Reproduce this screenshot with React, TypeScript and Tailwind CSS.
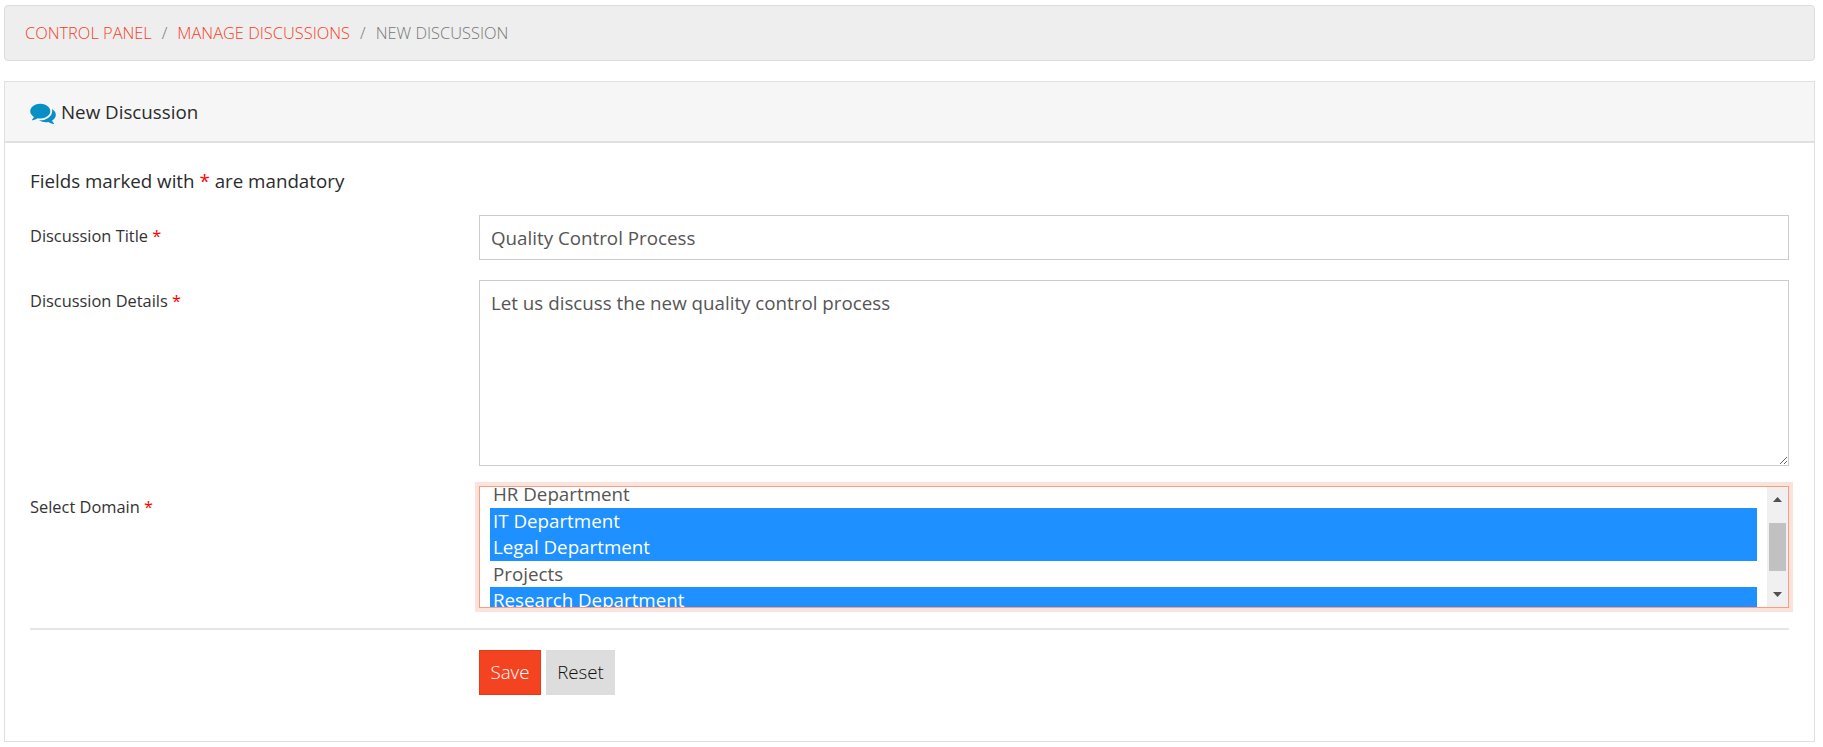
import { useLayoutEffect, useRef } from 'react';

const departments = [
    { name: 'Finance Department', selected: false },
    { name: 'HR Department', selected: false },
    { name: 'IT Department', selected: true },
    { name: 'Legal Department', selected: true },
    { name: 'Projects', selected: false },
    { name: 'Research Department', selected: true },
    { name: 'Sales Department', selected: false },
];

function Req() {
    return <span className="text-[#f00]">*</span>;
}

function FormRow({ label, children, className }: { label: string; children: React.ReactNode; className: string }) {
    return (
        <div className={`flex ${className}`}>
            <label className="w-[449px] shrink-0 pt-[11px] text-[16.4px] leading-[20px] text-[#333]">
                {label} <Req />
            </label>
            <div className="flex-1">{children}</div>
        </div>
    );
}

function DomainSelect() {
    const listRef = useRef<HTMLDivElement>(null);
    useLayoutEffect(() => {
        if (listRef.current) listRef.current.scrollTop = 32;
    }, []);
    return (
        <div className="flex h-[122px] border border-[#ff9a85] ring-4 ring-[#fae3da] bg-white overflow-hidden">
            <div ref={listRef} className="flex-1 overflow-hidden px-[10px]">
                {departments.map((d) => (
                    <div
                        key={d.name}
                        className={`h-[26.4px] px-[3px] text-[18.75px] leading-[26.4px] ${d.selected ? 'bg-[#1e90ff] text-white' : 'text-[#555]'}`}
                    >
                        {d.name}
                    </div>
                ))}
            </div>
            <div className="w-[21px] shrink-0 bg-[#f0f0f0] flex flex-col items-center justify-between relative">
                <svg width="9" height="5" viewBox="0 0 9 5" className="mt-[10px]">
                    <path d="M4.5 0L9 5H0Z" fill="#505050" />
                </svg>
                <div className="absolute left-[2px] top-[36px] h-[48px] w-[17px] bg-[#c1c1c1]" />
                <svg width="9" height="5" viewBox="0 0 9 5" className="mb-[10px]">
                    <path d="M0 0H9L4.5 5Z" fill="#505050" />
                </svg>
            </div>
        </div>
    );
}

export default function App() {
    return (
        <div className="min-h-[747px] bg-white pt-[5px] pl-[4px] pr-[8px] font-['Open_Sans',sans-serif]">
            <div className="h-[56px] rounded-[4px] border border-[#dcdcdc] bg-[#eee] flex items-center pl-[20px] text-[16.4px] font-light">
                <a className="text-[#f4411f]">CONTROL PANEL</a>
                <span className="px-[10px] text-[#777]">/</span>
                <a className="text-[#f4411f]">MANAGE DISCUSSIONS</a>
                <span className="px-[10px] text-[#777]">/</span>
                <span className="text-[#777]">NEW DISCUSSION</span>
            </div>

            <div className="mt-[20px] h-[661px] border border-[#e0e0e0]">
                <div className="h-[61px] border-b-2 border-[#e0e0e0] bg-[#f6f6f6] flex items-center pl-[25px] pt-[2px] text-[18.75px] text-[#2b2b2b]">
                    {/* comments icon */}
                    <svg width="26" height="22" viewBox="0 128 1792 1536" className="mr-[5px]" fill="#0a8fc4">
                        <path d="M1408 768q0 139-94 257t-256 186-353 68q-86 0-176-16-124 88-278 128-36 9-86 16h-3q-11 0-20.500-8t-11.500-21q-1-3-1-6.500t.5-6.500 2-6l2.500-5 3.500-5.500 4-5 4.500-5 4-4.500q5-6 23-25t26-29.500 22.500-29 25-38.500 20.500-44q-124-72-195-177t-71-224q0-139 94-257t256-186 353-68 353 68 256 186 94 257zM1792 1024q0 120-71 224.500t-195 176.500q10 24 20.500 44t25 38.500 22.500 29 26 29.500 23 25q1 1 4 4.500t4.500 5 4 5 3.500 5.500l2.500 5t2 6 .5 6.500-1 6.500q-3 14-13 22t-22 7q-50-7-86-16-154-40-278-128-90 16-176 16-271 0-472-132 58 4 88 4 161 0 309-45t264-129q125-92 192-212t67-254q0-77-23-152 129 71 204 178t75 230z" />
                    </svg>
                    New Discussion
                </div>

                <div className="px-[25px]">
                    <p className="pt-[24px] text-[18.75px] leading-[28px] text-[#2b2b2b]">
                        Fields marked with <Req /> are mandatory
                    </p>
                    <FormRow label="Discussion Title" className="mt-[20px] h-[45px]">
                        <input
                            readOnly
                            value="Quality Control Process"
                            className="block h-[45px] w-full border border-[#ccc] px-[11px] text-[18.75px] text-[#555] outline-none"
                        />
                    </FormRow>
                    <FormRow label="Discussion Details" className="mt-[20px]">
                        <textarea
                            readOnly
                            value="Let us discuss the new quality control process"
                            className="block h-[186px] w-full border border-[#ccc] px-[11px] py-[8px] text-[18.75px] leading-[27px] text-[#555] outline-none"
                        />
                    </FormRow>
                    <FormRow label="Select Domain" className="mt-[20px]">
                        <DomainSelect />
                    </FormRow>
                    <div className="mt-[20px] border-t-2 border-[#e6e6e6]" />
                    <div className="mt-[20px] flex gap-[5px] pl-[449px]">
                        <button className="h-[45px] w-[62px] border border-[#e8381a] bg-[#f44321] text-[18.75px] font-light text-white">
                            Save
                        </button>
                        <button className="h-[45px] w-[69px] bg-[#ddd] text-[18.75px] font-light text-[#111]">Reset</button>
                    </div>
                </div>
            </div>
        </div>
    );
}
